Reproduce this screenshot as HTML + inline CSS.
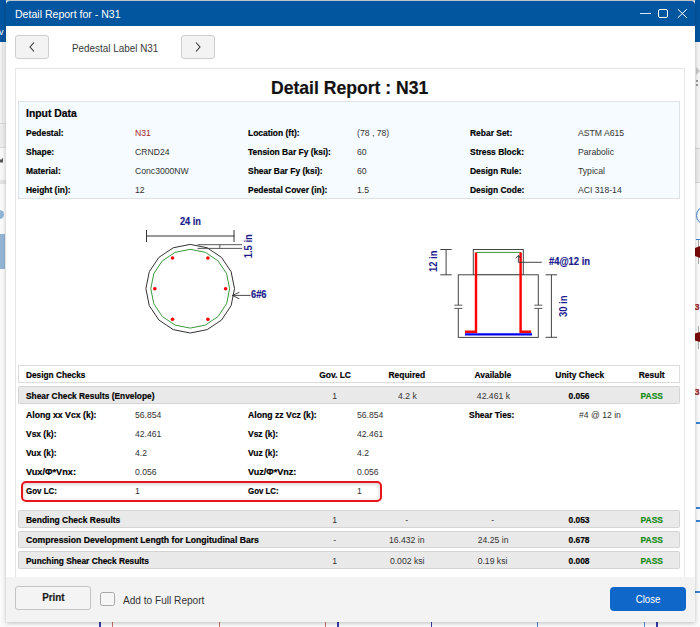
<!DOCTYPE html>
<html><head><meta charset="utf-8"><style>
html,body{margin:0;padding:0;}
body{width:700px;height:627px;position:relative;overflow:hidden;background:#fbfbfb;font-family:"Liberation Sans", sans-serif;}
.b{position:absolute;}
.t{position:absolute;white-space:nowrap;line-height:1;}
.k{-webkit-text-stroke:0.2px currentColor;}
</style></head><body>
<div class="b" style="left:0px;top:0px;width:700px;height:627px;background:#fafafa"></div>
<div class="b" style="left:0px;top:0px;width:700px;height:1px;background:#c9d2dc"></div>
<div class="b" style="left:0px;top:0px;width:6px;height:42px;background:#0256a0"></div>
<div class="t" style="left:-1.00px;top:28.00px;font-size:9px;color:#ffffff;font-weight:normal">v</div>
<div class="b" style="left:0px;top:42px;width:6px;height:81px;background:#f2f2f2"></div>
<div class="b" style="left:2px;top:42px;width:1px;height:81px;background:#e0e0e0"></div>
<div class="b" style="left:0px;top:123px;width:6px;height:1px;background:#d8d8d8"></div>
<div class="b" style="left:0px;top:124px;width:6px;height:23px;background:#ececec"></div>
<div class="b" style="left:0px;top:147px;width:6px;height:1px;background:#dadada"></div>
<div class="b" style="left:0px;top:150px;width:6px;height:1px;background:#e2e2e2"></div>
<div class="b" style="left:0px;top:149px;width:6px;height:31px;background:#f7f7f7"></div>
<svg class="b" style="left:0;top:156px" width="5" height="8"><path d="M0 3.5H1.6L3 1.5V6.5H0Z" fill="#555"/></svg>
<div class="b" style="left:0px;top:180px;width:6px;height:4px;background:#e4e4e4"></div>
<div class="b" style="left:-5px;top:209.8px;width:9px;height:9px;border-radius:50%;background:#8fb4d6"></div>
<div class="b" style="left:0px;top:234px;width:5px;height:35px;background:#93b5d5"></div>
<div class="b" style="left:695px;top:0px;width:5px;height:627px;background:#f4f4f4"></div>
<div class="b" style="left:695px;top:0px;width:5px;height:42px;background:#0256a0"></div>
<div class="b" style="left:695px;top:148px;width:5px;height:1px;background:#d4d4d4"></div>
<svg class="b" style="left:695px;top:66px" width="5" height="10"><path d="M1 1L5 5L1 9Z" fill="#c8c8c8"/></svg>
<div class="b" style="left:696px;top:80px;width:1.5px;height:1.5px;background:#999"></div>
<div class="b" style="left:696px;top:84px;width:1.5px;height:1.5px;background:#999"></div>
<div class="b" style="left:695px;top:149px;width:5px;height:33px;background:#ececec"></div>
<div class="b" style="left:695px;top:182px;width:5px;height:1px;background:#d4d4d4"></div>
<div class="b" style="left:695px;top:183px;width:5px;height:444px;background:#fafafa"></div>
<div class="b" style="left:695.5px;top:206.3px;width:19px;height:19px;border-radius:50%;border:1.4px solid #3a82d2;box-sizing:border-box"></div>
<div class="b" style="left:696px;top:238.5px;width:4px;height:1.5px;background:#3a82d2"></div>
<div class="b" style="left:698px;top:240px;width:2px;height:24px;background:#fff;border-left:1px solid #aaa;box-sizing:border-box"></div>
<svg class="b" style="left:695px;top:246px" width="5" height="12"><path d="M0 2L5 0V12L0 10Z" fill="#7a0a0a"/></svg>
<div class="t k" style="left:694.50px;top:303.00px;font-size:9px;color:#a02020;font-weight:bold">3</div>
<div class="b" style="left:698px;top:325.5px;width:2px;height:23.5px;background:#fff;border-left:1px solid #aaa;box-sizing:border-box"></div>
<svg class="b" style="left:695px;top:332px" width="5" height="10"><path d="M0 1.5L5 0V10L0 8.5Z" fill="#7a0a0a"/></svg>
<div class="t k" style="left:694.50px;top:388.00px;font-size:9px;color:#a02020;font-weight:bold">3</div>
<div class="b" style="left:696px;top:422px;width:4px;height:1.5px;background:#3a82d2"></div>
<div class="b" style="left:696px;top:507px;width:4px;height:1.5px;background:#3a82d2"></div>
<div class="b" style="left:696px;top:520px;width:4px;height:1.5px;background:#3a82d2"></div>
<div class="b" style="left:695px;top:591px;width:5px;height:1.5px;background:#3a82d2"></div>
<div class="b" style="left:99px;top:621px;width:2px;height:6px;background:#3a3aa8"></div>
<div class="b" style="left:112px;top:621px;width:1.3px;height:6px;background:#c87070"></div>
<div class="b" style="left:218.5px;top:621px;width:1.3px;height:6px;background:#c87070"></div>
<div class="b" style="left:324.5px;top:621px;width:1.3px;height:6px;background:#c87070"></div>
<div class="b" style="left:337px;top:621px;width:1.6px;height:6px;background:#3a3aa8"></div>
<div class="b" style="left:430.5px;top:621px;width:1.6px;height:6px;background:#3a3aa8"></div>
<div class="b" style="left:643.5px;top:621px;width:1.2px;height:6px;background:#5b8fd8"></div>
<div class="b" style="left:536.5px;top:621px;width:1.5px;height:6px;background:#4a86d0"></div>
<div class="b" style="left:656px;top:621px;width:2px;height:6px;background:#3a3aa8"></div>
<div class="b" style="left:5.5px;top:1px;width:689.5px;height:621px;background:#f3f3f3;border-radius:4px 4px 0 0;box-shadow:0 1px 4px rgba(0,0,0,0.25)"></div>
<div class="b" style="left:5.5px;top:1px;width:689.5px;height:25px;background:#0256a0;border-radius:4px 4px 0 0"></div>
<div class="b" style="left:5.5px;top:26px;width:689.5px;height:551px;background:#ffffff"></div>
<div class="t" style="left:15.10px;top:9.00px;font-size:11px;color:#ffffff;font-weight:normal;transform:scaleX(0.959);transform-origin:left">Detail Report for - N31</div>
<div class="b" style="left:640.3px;top:12.6px;width:10.300000000000068px;height:1.0px;background:rgba(255,255,255,0.85)"></div>
<div class="b" style="left:658.3px;top:8.5px;width:9.8px;height:9.8px;border:1px solid #fff;border-radius:2px;box-sizing:border-box"></div>
<svg class="b" style="left:676px;top:8px" width="12" height="12" viewBox="0 0 12 12"><path d="M1.8 1.2L10.8 9.8M10.8 1.2L1.8 9.8" stroke="#fff" stroke-width="1"/></svg>
<div class="b" style="left:15px;top:35px;width:33.5px;height:24px;background:#f3f3f3;border:1px solid #cdcdcd;border-radius:3px;box-sizing:border-box"></div>
<div class="b" style="left:181px;top:35px;width:33.5px;height:24px;background:#f3f3f3;border:1px solid #cdcdcd;border-radius:3px;box-sizing:border-box"></div>
<svg class="b" style="left:26px;top:40px" width="12" height="14" viewBox="0 0 12 14"><path d="M8 2.5L4 7L8 11.5" fill="none" stroke="#333" stroke-width="1.1"/></svg>
<svg class="b" style="left:192px;top:40px" width="12" height="14" viewBox="0 0 12 14"><path d="M4 2.5L8 7L4 11.5" fill="none" stroke="#333" stroke-width="1.1"/></svg>
<div class="t" style="left:72.00px;top:42.00px;font-size:11.6px;color:#3a3a3a;font-weight:normal;transform:scaleX(0.853);transform-origin:left">Pedestal Label N31</div>
<div class="b" style="left:15px;top:68px;width:670px;height:520px;border:1px solid #e6e6e6;border-bottom:none;box-sizing:border-box;background:#fff"></div>
<div class="t k" style="left:270.60px;top:78.00px;font-size:19px;color:#111;font-weight:bold;transform:scaleX(0.925);transform-origin:left">Detail Report : N31</div>
<div class="b" style="left:18px;top:101px;width:662px;height:98px;border:1px solid #dde2e6;box-sizing:border-box;background:#f5fbfe"></div>
<div class="t k" style="left:26.10px;top:108.00px;font-size:11px;color:#000;font-weight:bold;transform:scaleX(0.943);transform-origin:left">Input Data</div>
<div class="t k" style="left:26.00px;top:128.00px;font-size:9.6px;color:#000;font-weight:bold;transform:scaleX(0.880);transform-origin:left">Pedestal:</div>
<div class="t" style="left:134.80px;top:128.00px;font-size:9.6px;color:#a3262a;font-weight:normal;transform:scaleX(0.900);transform-origin:left">N31</div>
<div class="t k" style="left:247.50px;top:128.00px;font-size:9.6px;color:#000;font-weight:bold;transform:scaleX(0.880);transform-origin:left">Location (ft):</div>
<div class="t" style="left:356.70px;top:128.00px;font-size:9.6px;color:#333;font-weight:normal;transform:scaleX(0.900);transform-origin:left">(78 , 78)</div>
<div class="t k" style="left:469.50px;top:128.00px;font-size:9.6px;color:#000;font-weight:bold;transform:scaleX(0.880);transform-origin:left">Rebar Set:</div>
<div class="t" style="left:578.40px;top:128.00px;font-size:9.6px;color:#333;font-weight:normal;transform:scaleX(0.900);transform-origin:left">ASTM A615</div>
<div class="t k" style="left:26.00px;top:147.00px;font-size:9.6px;color:#000;font-weight:bold;transform:scaleX(0.880);transform-origin:left">Shape:</div>
<div class="t" style="left:134.80px;top:147.00px;font-size:9.6px;color:#333;font-weight:normal;transform:scaleX(0.900);transform-origin:left">CRND24</div>
<div class="t k" style="left:247.50px;top:147.00px;font-size:9.6px;color:#000;font-weight:bold;transform:scaleX(0.880);transform-origin:left">Tension Bar Fy (ksi):</div>
<div class="t" style="left:356.70px;top:147.00px;font-size:9.6px;color:#333;font-weight:normal;transform:scaleX(0.900);transform-origin:left">60</div>
<div class="t k" style="left:469.50px;top:147.00px;font-size:9.6px;color:#000;font-weight:bold;transform:scaleX(0.880);transform-origin:left">Stress Block:</div>
<div class="t" style="left:578.40px;top:147.00px;font-size:9.6px;color:#333;font-weight:normal;transform:scaleX(0.900);transform-origin:left">Parabolic</div>
<div class="t k" style="left:26.00px;top:166.00px;font-size:9.6px;color:#000;font-weight:bold;transform:scaleX(0.880);transform-origin:left">Material:</div>
<div class="t" style="left:134.80px;top:166.00px;font-size:9.6px;color:#333;font-weight:normal;transform:scaleX(0.900);transform-origin:left">Conc3000NW</div>
<div class="t k" style="left:247.50px;top:166.00px;font-size:9.6px;color:#000;font-weight:bold;transform:scaleX(0.880);transform-origin:left">Shear Bar Fy (ksi):</div>
<div class="t" style="left:356.70px;top:166.00px;font-size:9.6px;color:#333;font-weight:normal;transform:scaleX(0.900);transform-origin:left">60</div>
<div class="t k" style="left:469.50px;top:166.00px;font-size:9.6px;color:#000;font-weight:bold;transform:scaleX(0.880);transform-origin:left">Design Rule:</div>
<div class="t" style="left:578.40px;top:166.00px;font-size:9.6px;color:#333;font-weight:normal;transform:scaleX(0.900);transform-origin:left">Typical</div>
<div class="t k" style="left:26.00px;top:185.00px;font-size:9.6px;color:#000;font-weight:bold;transform:scaleX(0.880);transform-origin:left">Height (in):</div>
<div class="t" style="left:134.80px;top:185.00px;font-size:9.6px;color:#333;font-weight:normal;transform:scaleX(0.900);transform-origin:left">12</div>
<div class="t k" style="left:247.50px;top:185.00px;font-size:9.6px;color:#000;font-weight:bold;transform:scaleX(0.880);transform-origin:left">Pedestal Cover (in):</div>
<div class="t" style="left:356.70px;top:185.00px;font-size:9.6px;color:#333;font-weight:normal;transform:scaleX(0.900);transform-origin:left">1.5</div>
<div class="t k" style="left:469.50px;top:185.00px;font-size:9.6px;color:#000;font-weight:bold;transform:scaleX(0.880);transform-origin:left">Design Code:</div>
<div class="t" style="left:578.40px;top:185.00px;font-size:9.6px;color:#333;font-weight:normal;transform:scaleX(0.900);transform-origin:left">ACI 318-14</div>
<svg class="b" style="left:0;top:0" width="700" height="627" viewBox="0 0 700 627"><polygon points="190.20,244.40 173.25,247.77 158.88,257.38 149.27,271.75 145.90,288.70 149.27,305.65 158.88,320.02 173.25,329.63 190.20,333.00 207.15,329.63 221.52,320.02 231.13,305.65 234.50,288.70 231.13,271.75 221.52,257.38 207.15,247.77" fill="none" stroke="#333" stroke-width="1"/><polygon points="190.20,249.30 175.12,252.30 162.34,260.84 153.80,273.62 150.80,288.70 153.80,303.78 162.34,316.56 175.12,325.10 190.20,328.10 205.28,325.10 218.06,316.56 226.60,303.78 229.60,288.70 226.60,273.62 218.06,260.84 205.28,252.30" fill="none" stroke="#3a9a3a" stroke-width="1"/><circle cx="225.60" cy="288.70" r="1.8" fill="#ff0000"/><circle cx="207.90" cy="258.04" r="1.8" fill="#ff0000"/><circle cx="172.50" cy="258.04" r="1.8" fill="#ff0000"/><circle cx="154.80" cy="288.70" r="1.8" fill="#ff0000"/><circle cx="172.50" cy="319.36" r="1.8" fill="#ff0000"/><circle cx="207.90" cy="319.36" r="1.8" fill="#ff0000"/><path d="M146 236H234.5M146.5 230V242M234 230V242" stroke="#333" stroke-width="1" fill="none"/><path d="M197.5 244.7H242M197.5 248.4H242M219.8 244.7V248.4" stroke="#444" stroke-width="0.9" fill="none"/><path d="M232.4 295.4H250.5M239.4 292.3L232.4 295.4L239.4 298.8" stroke="#333" stroke-width="0.9" fill="none"/><rect x="473.3" y="249.5" width="50" height="25.3" fill="none" stroke="#444" stroke-width="1"/><rect x="458.3" y="274.8" width="80" height="62.6" fill="#fff" stroke="#444" stroke-width="1"/><rect x="455.3" y="305" width="6" height="3.6" fill="#fff"/><path d="M454.3 305.2H462.3M454.3 308.4H462.3" stroke="#444" stroke-width="0.9"/><rect x="535.3" y="305" width="6" height="3.6" fill="#fff"/><path d="M534.3 305.2H542.3M534.3 308.4H542.3" stroke="#444" stroke-width="0.9"/><path d="M475.8 252.4H521" stroke="#3a9a3a" stroke-width="1"/><path d="M465 331.8H476V252.4M531.2 331.8H520.6V252.4" stroke="#ff0000" stroke-width="2.4" fill="none"/><path d="M465 334.4H532" stroke="#0000ee" stroke-width="2.4"/><path d="M515.6 258.2L518.6 255.4L520.4 258M518.4 255.6V262.3H541.8" stroke="#333" stroke-width="0.9" fill="none"/><path d="M446.1 249.5V274.8M440.3 249.5H451.7M440.3 274.8H451.7" stroke="#444" stroke-width="1" fill="none"/><path d="M551.4 274.8V337.3M545.5 274.8H557.1M545.5 337.3H557.1" stroke="#444" stroke-width="1" fill="none"/></svg>
<div class="t k" style="left:178.91px;top:217.00px;font-size:10px;color:#1c1c8c;font-weight:bold;transform:scaleX(0.922);transform-origin:center">24 in</div>
<div class="t k" style="left:250.80px;top:290.00px;font-size:10px;color:#1c1c8c;font-weight:bold;transform:scaleX(0.929);transform-origin:left">6#6</div>
<div class="t k" style="left:549.10px;top:257.00px;font-size:10px;color:#1c1c8c;font-weight:bold;transform:scaleX(0.939);transform-origin:left">#4@12 in</div>
<div class="t" style="left:234.78px;top:241.15px;font-size:10.5px;line-height:10.5px;font-weight:bold;color:#1c1c8c;transform:rotate(-90deg) scaleX(0.894);transform-origin:center">1.5 in</div>
<div class="t" style="left:420.54px;top:255.75px;font-size:10.5px;line-height:10.5px;font-weight:bold;color:#1c1c8c;transform:rotate(-90deg) scaleX(0.894);transform-origin:center">12 in</div>
<div class="t" style="left:551.24px;top:300.55px;font-size:10.5px;line-height:10.5px;font-weight:bold;color:#1c1c8c;transform:rotate(-90deg) scaleX(0.903);transform-origin:center">30 in</div>
<div class="b" style="left:18px;top:365px;width:662px;height:18.19999999999999px;border:1px solid #dcdcdc;box-sizing:border-box;background:#fff"></div>
<div class="t k" style="left:26.00px;top:370.00px;font-size:9.6px;color:#000;font-weight:bold;transform:scaleX(0.863);transform-origin:left">Design Checks</div>
<div class="t k" style="left:316.96px;top:370.00px;font-size:9.6px;color:#000;font-weight:bold;transform:scaleX(0.880);transform-origin:center">Gov. LC</div>
<div class="t k" style="left:386.20px;top:370.00px;font-size:9.6px;color:#000;font-weight:bold;transform:scaleX(0.880);transform-origin:center">Required</div>
<div class="t k" style="left:472.30px;top:370.00px;font-size:9.6px;color:#000;font-weight:bold;transform:scaleX(0.880);transform-origin:center">Available</div>
<div class="t k" style="left:551.86px;top:370.00px;font-size:9.6px;color:#000;font-weight:bold;transform:scaleX(0.880);transform-origin:center">Unity Check</div>
<div class="t k" style="left:636.63px;top:370.00px;font-size:9.6px;color:#000;font-weight:bold;transform:scaleX(0.880);transform-origin:center">Result</div>
<div class="b" style="left:18px;top:386px;width:662px;height:18px;border:1px solid #d4d4d4;border-radius:1.5px;box-sizing:border-box;background:#e9e9e9"></div>
<div class="t k" style="left:26.00px;top:391.00px;font-size:9.6px;color:#000;font-weight:bold;transform:scaleX(0.873);transform-origin:left">Shear Check Results (Envelope)</div>
<div class="t" style="left:332.33px;top:391.00px;font-size:9.6px;color:#333;font-weight:normal;transform:scaleX(0.900);transform-origin:center">1</div>
<div class="t" style="left:396.59px;top:391.00px;font-size:9.6px;color:#333;font-weight:normal;transform:scaleX(0.900);transform-origin:center">4.2 k</div>
<div class="t" style="left:474.59px;top:391.00px;font-size:9.6px;color:#333;font-weight:normal;transform:scaleX(0.900);transform-origin:center">42.461 k</div>
<div class="t k" style="left:567.39px;top:391.00px;font-size:9.6px;color:#000;font-weight:bold;transform:scaleX(0.880);transform-origin:center">0.056</div>
<div class="t k" style="left:638.69px;top:391.00px;font-size:9.6px;color:#138a13;font-weight:bold;transform:scaleX(0.880);transform-origin:center">PASS</div>
<div class="b" style="left:21px;top:481px;width:360.5px;height:21px;border:2px solid #e8151d;border-radius:5px;box-sizing:border-box;background:#fff;box-shadow:inset 0 1px 4px rgba(0,0,0,0.2)"></div>
<div class="t k" style="left:26.00px;top:410.00px;font-size:9.6px;color:#000;font-weight:bold;transform:scaleX(0.906);transform-origin:left">Along xx Vcx (k):</div>
<div class="t" style="left:134.90px;top:410.00px;font-size:9.6px;color:#333;font-weight:normal;transform:scaleX(0.900);transform-origin:left">56.854</div>
<div class="t k" style="left:247.60px;top:410.00px;font-size:9.6px;color:#000;font-weight:bold;transform:scaleX(0.901);transform-origin:left">Along zz Vcz (k):</div>
<div class="t" style="left:356.80px;top:410.00px;font-size:9.6px;color:#333;font-weight:normal;transform:scaleX(0.900);transform-origin:left">56.854</div>
<div class="t k" style="left:26.00px;top:429.00px;font-size:9.6px;color:#000;font-weight:bold;transform:scaleX(0.880);transform-origin:left">Vsx (k):</div>
<div class="t" style="left:134.90px;top:429.00px;font-size:9.6px;color:#333;font-weight:normal;transform:scaleX(0.900);transform-origin:left">42.461</div>
<div class="t k" style="left:247.60px;top:429.00px;font-size:9.6px;color:#000;font-weight:bold;transform:scaleX(0.880);transform-origin:left">Vsz (k):</div>
<div class="t" style="left:356.80px;top:429.00px;font-size:9.6px;color:#333;font-weight:normal;transform:scaleX(0.900);transform-origin:left">42.461</div>
<div class="t k" style="left:26.00px;top:448.00px;font-size:9.6px;color:#000;font-weight:bold;transform:scaleX(0.880);transform-origin:left">Vux (k):</div>
<div class="t" style="left:134.90px;top:448.00px;font-size:9.6px;color:#333;font-weight:normal;transform:scaleX(0.900);transform-origin:left">4.2</div>
<div class="t k" style="left:247.60px;top:448.00px;font-size:9.6px;color:#000;font-weight:bold;transform:scaleX(0.880);transform-origin:left">Vuz (k):</div>
<div class="t" style="left:356.80px;top:448.00px;font-size:9.6px;color:#333;font-weight:normal;transform:scaleX(0.900);transform-origin:left">4.2</div>
<div class="t k" style="left:26.00px;top:467.00px;font-size:9.6px;color:#000;font-weight:bold;transform:scaleX(0.955);transform-origin:left">Vux/Φ*Vnx:</div>
<div class="t" style="left:134.90px;top:467.00px;font-size:9.6px;color:#333;font-weight:normal;transform:scaleX(0.900);transform-origin:left">0.056</div>
<div class="t k" style="left:247.60px;top:467.00px;font-size:9.6px;color:#000;font-weight:bold;transform:scaleX(0.944);transform-origin:left">Vuz/Φ*Vnz:</div>
<div class="t" style="left:356.80px;top:467.00px;font-size:9.6px;color:#333;font-weight:normal;transform:scaleX(0.900);transform-origin:left">0.056</div>
<div class="t k" style="left:26.00px;top:486.00px;font-size:9.6px;color:#000;font-weight:bold;transform:scaleX(0.830);transform-origin:left">Gov LC:</div>
<div class="t" style="left:134.90px;top:486.00px;font-size:9.6px;color:#333;font-weight:normal;transform:scaleX(0.900);transform-origin:left">1</div>
<div class="t k" style="left:247.60px;top:486.00px;font-size:9.6px;color:#000;font-weight:bold;transform:scaleX(0.822);transform-origin:left">Gov LC:</div>
<div class="t" style="left:356.80px;top:486.00px;font-size:9.6px;color:#333;font-weight:normal;transform:scaleX(0.900);transform-origin:left">1</div>
<div class="t k" style="left:469.40px;top:410.00px;font-size:9.6px;color:#000;font-weight:bold;transform:scaleX(0.880);transform-origin:left">Shear Ties:</div>
<div class="t" style="left:578.60px;top:410.00px;font-size:9.6px;color:#333;font-weight:normal;transform:scaleX(0.900);transform-origin:left">#4 @ 12 in</div>
<div class="b" style="left:18px;top:510px;width:662px;height:17.5px;border:1px solid #d4d4d4;border-radius:1.5px;box-sizing:border-box;background:#e9e9e9"></div>
<div class="t k" style="left:26.00px;top:515.00px;font-size:9.6px;color:#000;font-weight:bold;transform:scaleX(0.880);transform-origin:left">Bending Check Results</div>
<div class="t" style="left:332.33px;top:515.00px;font-size:9.6px;color:#333;font-weight:normal;transform:scaleX(0.900);transform-origin:center">1</div>
<div class="t" style="left:405.40px;top:515.00px;font-size:9.6px;color:#333;font-weight:normal;transform:scaleX(0.900);transform-origin:center">-</div>
<div class="t" style="left:491.40px;top:515.00px;font-size:9.6px;color:#333;font-weight:normal;transform:scaleX(0.900);transform-origin:center">-</div>
<div class="t k" style="left:567.39px;top:515.00px;font-size:9.6px;color:#000;font-weight:bold;transform:scaleX(0.880);transform-origin:center">0.053</div>
<div class="t k" style="left:638.69px;top:515.00px;font-size:9.6px;color:#138a13;font-weight:bold;transform:scaleX(0.880);transform-origin:center">PASS</div>
<div class="b" style="left:18px;top:530.5px;width:662px;height:17.5px;border:1px solid #d4d4d4;border-radius:1.5px;box-sizing:border-box;background:#e9e9e9"></div>
<div class="t k" style="left:26.00px;top:535.00px;font-size:9.6px;color:#000;font-weight:bold;transform:scaleX(0.901);transform-origin:left">Compression Development Length for Longitudinal Bars</div>
<div class="t" style="left:333.40px;top:535.00px;font-size:9.6px;color:#333;font-weight:normal;transform:scaleX(0.900);transform-origin:center">-</div>
<div class="t" style="left:387.25px;top:535.00px;font-size:9.6px;color:#333;font-weight:normal;transform:scaleX(0.900);transform-origin:center">16.432 in</div>
<div class="t" style="left:475.92px;top:535.00px;font-size:9.6px;color:#333;font-weight:normal;transform:scaleX(0.900);transform-origin:center">24.25 in</div>
<div class="t k" style="left:567.39px;top:535.00px;font-size:9.6px;color:#000;font-weight:bold;transform:scaleX(0.880);transform-origin:center">0.678</div>
<div class="t k" style="left:638.69px;top:535.00px;font-size:9.6px;color:#138a13;font-weight:bold;transform:scaleX(0.880);transform-origin:center">PASS</div>
<div class="b" style="left:18px;top:551px;width:662px;height:17.700000000000045px;border:1px solid #d4d4d4;border-radius:1.5px;box-sizing:border-box;background:#e9e9e9"></div>
<div class="t k" style="left:26.00px;top:556.00px;font-size:9.6px;color:#000;font-weight:bold;transform:scaleX(0.867);transform-origin:left">Punching Shear Check Results</div>
<div class="t" style="left:332.33px;top:556.00px;font-size:9.6px;color:#333;font-weight:normal;transform:scaleX(0.900);transform-origin:center">1</div>
<div class="t" style="left:387.79px;top:556.00px;font-size:9.6px;color:#333;font-weight:normal;transform:scaleX(0.900);transform-origin:center">0.002 ksi</div>
<div class="t" style="left:476.46px;top:556.00px;font-size:9.6px;color:#333;font-weight:normal;transform:scaleX(0.900);transform-origin:center">0.19 ksi</div>
<div class="t k" style="left:567.39px;top:556.00px;font-size:9.6px;color:#000;font-weight:bold;transform:scaleX(0.880);transform-origin:center">0.008</div>
<div class="t k" style="left:638.69px;top:556.00px;font-size:9.6px;color:#138a13;font-weight:bold;transform:scaleX(0.880);transform-origin:center">PASS</div>
<div class="b" style="left:5.5px;top:577px;width:689.5px;height:45px;background:#f3f3f3"></div>
<div class="b" style="left:15px;top:586px;width:76px;height:23.5px;border:1.2px solid #c4c4c4;border-radius:3px;box-sizing:border-box;background:#f4f4f4"></div>
<div class="t k" style="left:41.00px;top:592.00px;font-size:10.8px;color:#1a1a1a;font-weight:bold;transform:scaleX(0.906);transform-origin:center">Print</div>
<div class="b" style="left:100px;top:591.5px;width:14.6px;height:14.6px;border:1px solid #a8a8a8;border-radius:2.5px;box-sizing:border-box;background:#f6f6f6"></div>
<div class="t" style="left:123.30px;top:595.00px;font-size:10.5px;color:#333;font-weight:normal;transform:scaleX(0.962);transform-origin:left">Add to Full Report</div>
<div class="b" style="left:609.5px;top:587px;width:76.5px;height:24px;border-radius:4px;background:#0f67c9"></div>
<div class="t" style="left:633.54px;top:594.00px;font-size:11px;color:#ffffff;font-weight:normal;transform:scaleX(0.882);transform-origin:center">Close</div>
</body></html>
